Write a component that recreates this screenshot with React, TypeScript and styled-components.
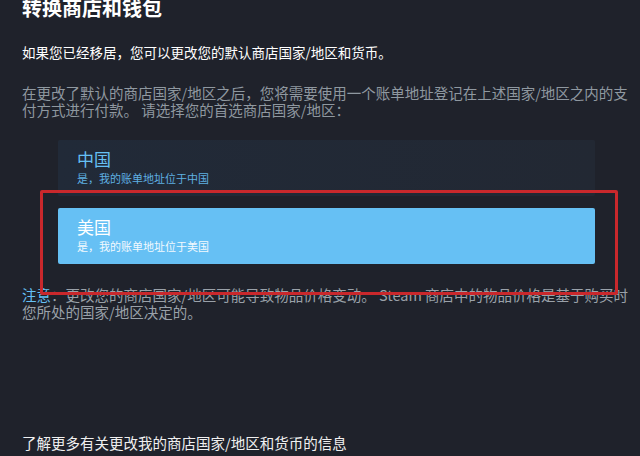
import styled, { createGlobalStyle } from 'styled-components';

const GlobalStyle = createGlobalStyle`
  html, body {
    margin: 0;
    padding: 0;
    background: #1f222b;
  }
  body {
    font-family: "Noto Sans CJK SC", "Noto Sans", "Liberation Sans", sans-serif;
    width: 640px;
    height: 456px;
    overflow: hidden;
  }
`;

const Page = styled.div`
  position: relative;
  padding: 0 22px;
  display: flex;
  flex-direction: column;
`;

const Title = styled.h1`
  margin: 0;
  font-size: 20px;
  line-height: 15px;
  font-weight: 700;
  color: #ffffff;
`;

const Intro = styled.p`
  margin: 29px 0 0;
  font-size: 13.5px;
  line-height: 16px;
  color: #ffffff;
`;

const Paragraph = styled.p<{ $gap: number }>`
  margin: ${(p) => p.$gap}px 0 0;
  font-size: 14.5px;
  line-height: 17px;
  color: #8f98a0;
  white-space: nowrap;
`;

const Link = styled.span`
  color: #66c0f4;
`;

const Options = styled.div`
  margin: 22px 0 0 36px;
  width: 537px;
  display: flex;
  flex-direction: column;
  gap: 12px;
`;

const Option = styled.div<{ $selected?: boolean }>`
  height: 56px;
  box-sizing: border-box;
  padding: 9px 19px 9px;
  border-radius: 2px;
  background: ${(p) =>
    p.$selected ? '#66c0f4' : 'linear-gradient(90deg, #212a38 0%, #222833 100%)'};
  color: ${(p) => (p.$selected ? '#ffffff' : '#66c0f4')};
`;

const OptionName = styled.div`
  font-size: 17px;
  line-height: 20px;
`;

const OptionSub = styled.div<{ $selected?: boolean }>`
  font-size: 11px;
  line-height: 18px;
  color: ${(p) => (p.$selected ? '#f2f9fe' : '#5fb0e2')};
`;

const Note = styled(Paragraph)`
  color: #9aa1a9;
`;

const MoreInfo = styled.p`
  margin: 114px 0 0;
  font-size: 14.5px;
  line-height: 17px;
  color: #f0f0f0;
`;

const Annotation = styled.div`
  position: absolute;
  left: 40px;
  top: 190px;
  width: 578px;
  height: 105px;
  box-sizing: border-box;
  border: 3px solid #c9282c;
  border-radius: 2px;
  pointer-events: none;
`;

export default function App() {
  return (
    <>
      <GlobalStyle />
      <Page>
        <Title>转换商店和钱包</Title>
        <Intro>如果您已经移居，您可以更改您的默认商店国家/地区和货币。</Intro>
        <Paragraph $gap={24}>
          在更改了默认的商店国家/地区之后，您将需要使用一个账单地址登记在上述国家/地区之内的支
          <br />
          付方式进行付款。 请选择您的首选商店国家/地区：
        </Paragraph>
        <Options>
          <Option>
            <OptionName>中国</OptionName>
            <OptionSub>是，我的账单地址位于中国</OptionSub>
          </Option>
          <Option $selected>
            <OptionName>美国</OptionName>
            <OptionSub $selected>是，我的账单地址位于美国</OptionSub>
          </Option>
        </Options>
        <Note $gap={22}>
          <Link>注意</Link>：更改您的商店国家/地区可能导致物品价格变动。 Steam 商店中的物品价格是基于购买时
          <br />
          您所处的国家/地区决定的。
        </Note>
        <MoreInfo>了解更多有关更改我的商店国家/地区和货币的信息</MoreInfo>
        <Annotation />
      </Page>
    </>
  );
}
